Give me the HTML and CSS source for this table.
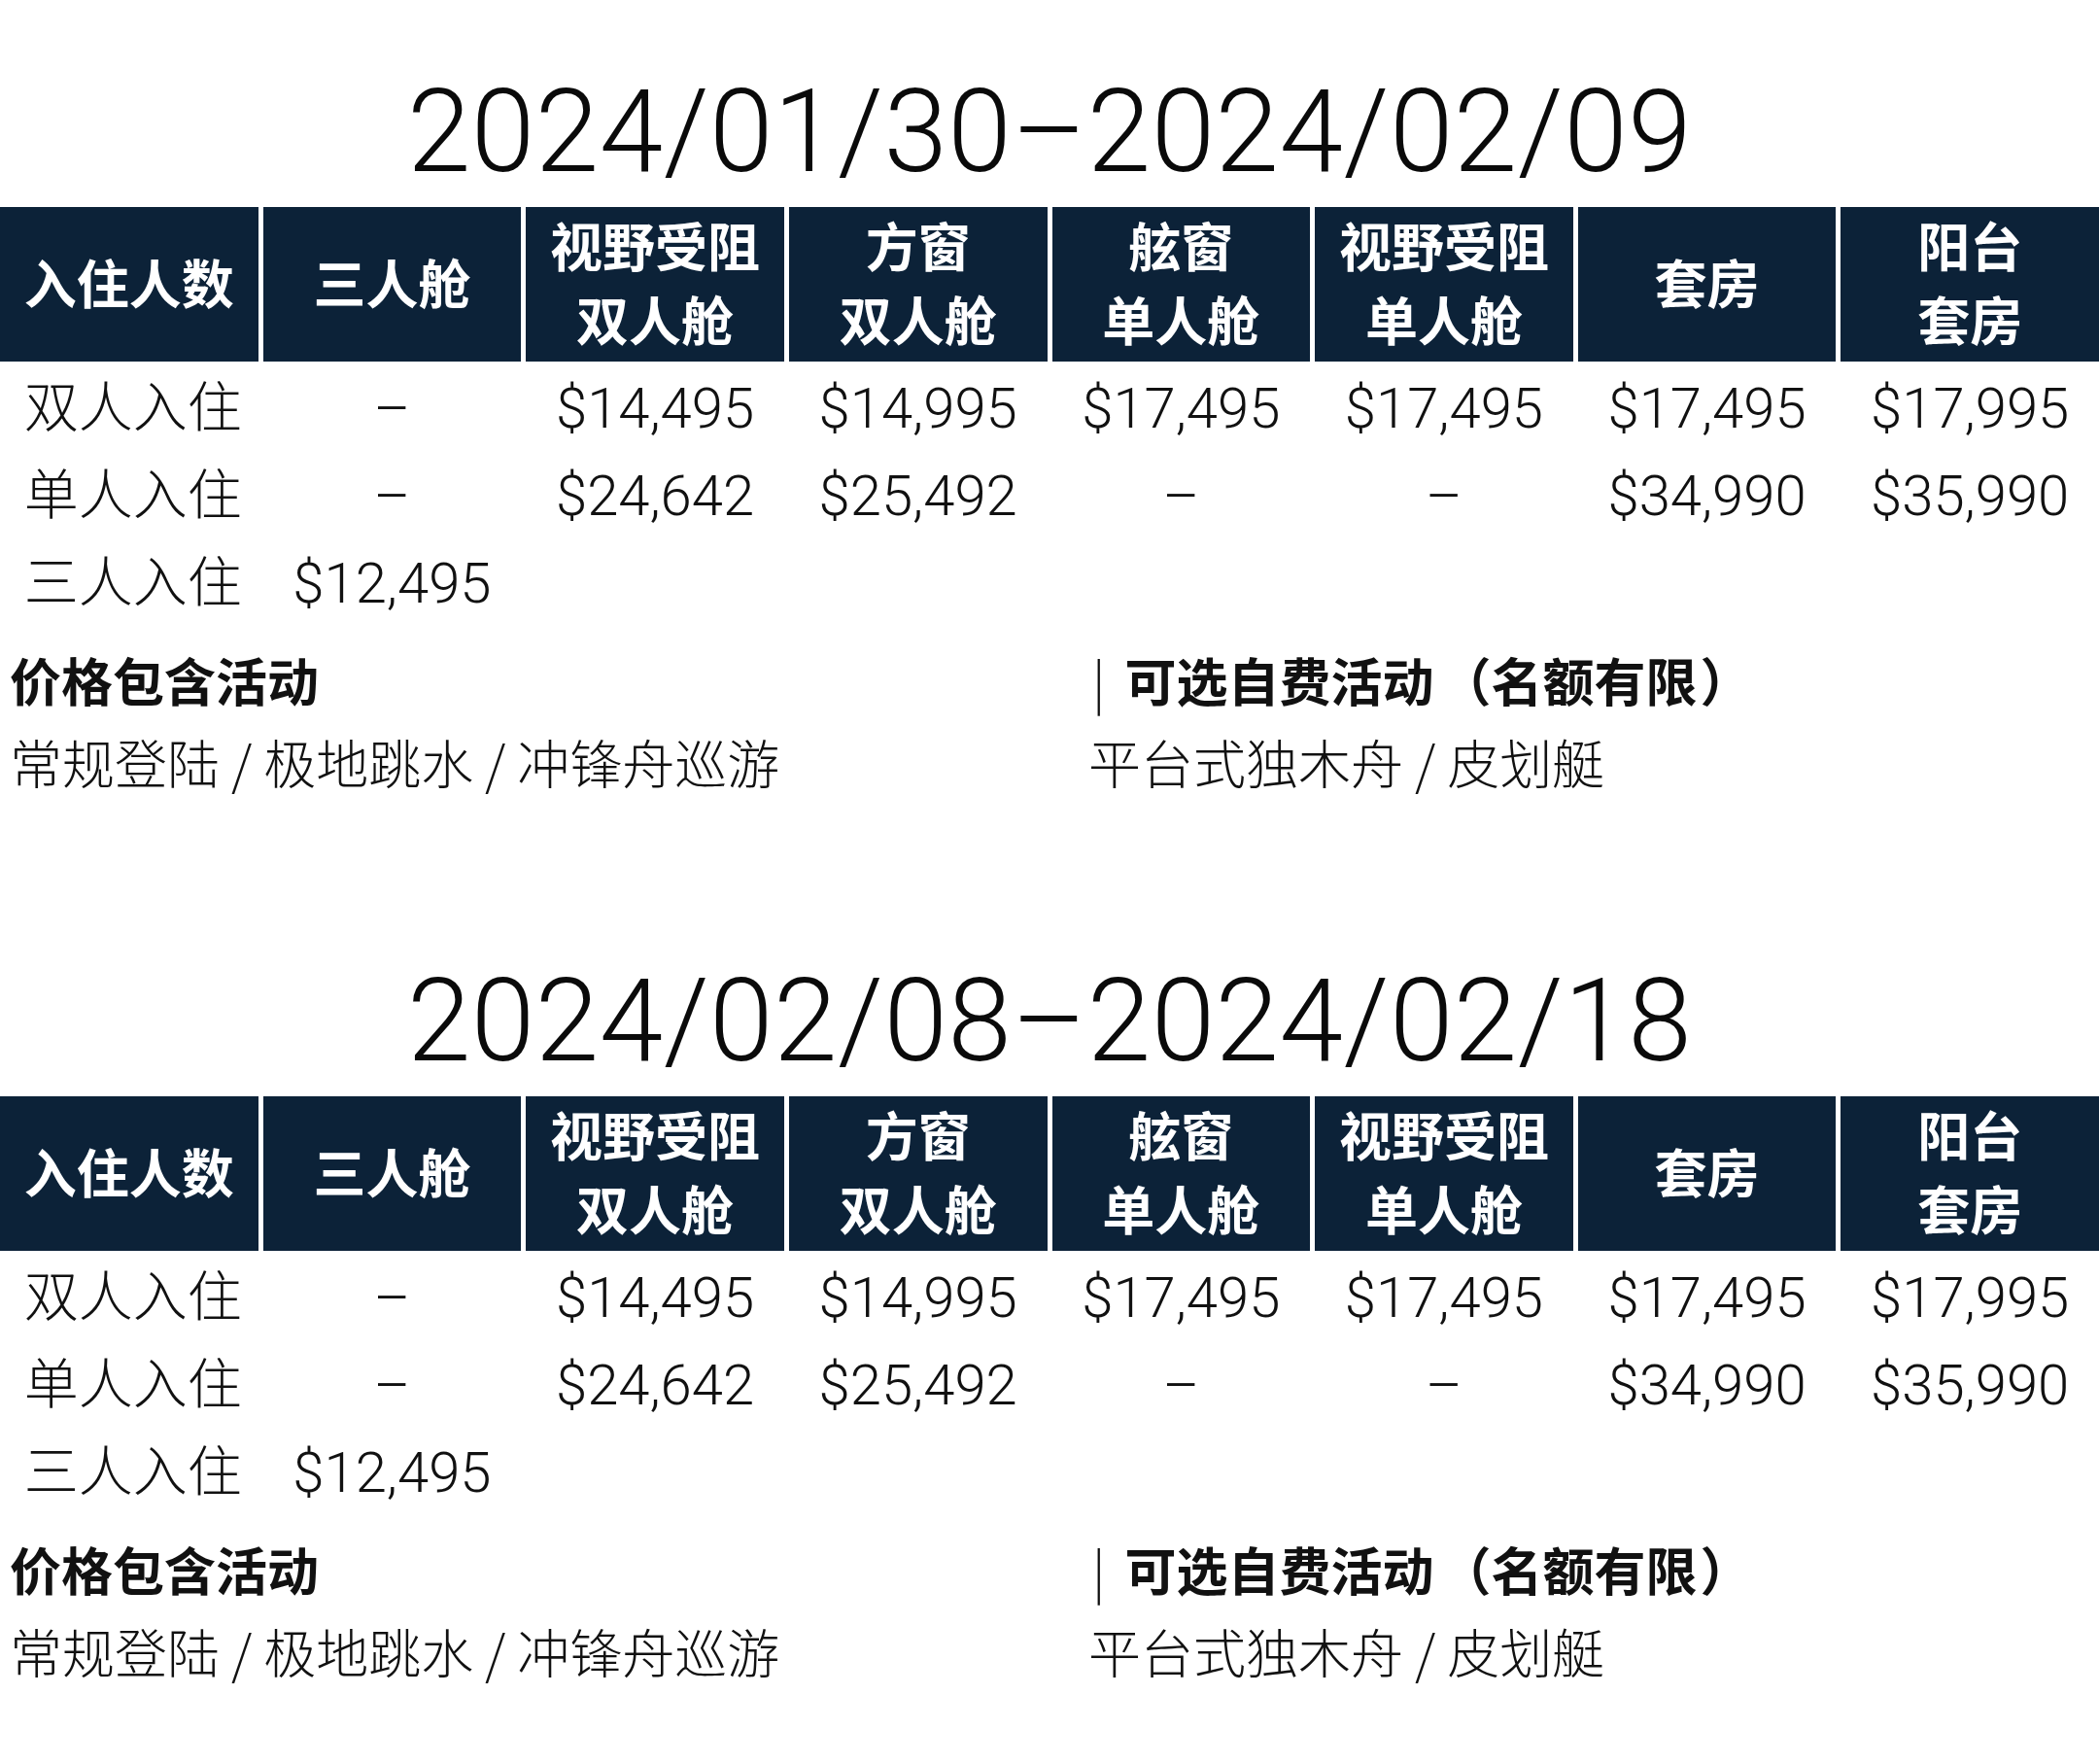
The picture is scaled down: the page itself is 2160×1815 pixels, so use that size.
FILE: index.html
```html
<!DOCTYPE html>
<html lang="zh-CN">
<head>
<meta charset="utf-8">
<title>价格表</title>
<link rel="stylesheet" href="styles.css">
</head>
<body>
<section class="period">
  <h2 class="title">2024/01/30–2024/02/09</h2>
  <div class="grid head">
    <div class="hcell">入住人数</div>
    <div class="hcell">三人舱</div>
    <div class="hcell">视野受阻<br>双人舱</div>
    <div class="hcell">方窗<br>双人舱</div>
    <div class="hcell">舷窗<br>单人舱</div>
    <div class="hcell">视野受阻<br>单人舱</div>
    <div class="hcell">套房</div>
    <div class="hcell">阳台<br>套房</div>
  </div>
  <div class="grid row">
    <div class="cell">双人入住</div><div class="cell">–</div><div class="cell">$14,495</div><div class="cell">$14,995</div><div class="cell">$17,495</div><div class="cell">$17,495</div><div class="cell">$17,495</div><div class="cell">$17,995</div>
  </div>
  <div class="grid row">
    <div class="cell">单人入住</div><div class="cell">–</div><div class="cell">$24,642</div><div class="cell">$25,492</div><div class="cell">–</div><div class="cell">–</div><div class="cell">$34,990</div><div class="cell">$35,990</div>
  </div>
  <div class="grid row">
    <div class="cell">三人入住</div><div class="cell">$12,495</div><div class="cell"></div><div class="cell"></div><div class="cell"></div><div class="cell"></div><div class="cell"></div><div class="cell"></div>
  </div>
  <div class="notes">
    <div class="note">
      <div class="note-label">价格包含活动</div>
      <div class="note-text">常规登陆 / 极地跳水 / 冲锋舟巡游</div>
    </div>
    <div class="note">
      <div class="note-label"><span class="bar">|</span>可选自费活动<span class="paren-open">（</span>名额有限<span class="paren-close">）</span></div>
      <div class="note-text">平台式独木舟 / 皮划艇</div>
    </div>
  </div>
</section>
<section class="period">
  <h2 class="title">2024/02/08–2024/02/18</h2>
  <div class="grid head">
    <div class="hcell">入住人数</div>
    <div class="hcell">三人舱</div>
    <div class="hcell">视野受阻<br>双人舱</div>
    <div class="hcell">方窗<br>双人舱</div>
    <div class="hcell">舷窗<br>单人舱</div>
    <div class="hcell">视野受阻<br>单人舱</div>
    <div class="hcell">套房</div>
    <div class="hcell">阳台<br>套房</div>
  </div>
  <div class="grid row">
    <div class="cell">双人入住</div><div class="cell">–</div><div class="cell">$14,495</div><div class="cell">$14,995</div><div class="cell">$17,495</div><div class="cell">$17,495</div><div class="cell">$17,495</div><div class="cell">$17,995</div>
  </div>
  <div class="grid row">
    <div class="cell">单人入住</div><div class="cell">–</div><div class="cell">$24,642</div><div class="cell">$25,492</div><div class="cell">–</div><div class="cell">–</div><div class="cell">$34,990</div><div class="cell">$35,990</div>
  </div>
  <div class="grid row">
    <div class="cell">三人入住</div><div class="cell">$12,495</div><div class="cell"></div><div class="cell"></div><div class="cell"></div><div class="cell"></div><div class="cell"></div><div class="cell"></div>
  </div>
  <div class="notes">
    <div class="note">
      <div class="note-label">价格包含活动</div>
      <div class="note-text">常规登陆 / 极地跳水 / 冲锋舟巡游</div>
    </div>
    <div class="note">
      <div class="note-label"><span class="bar">|</span>可选自费活动<span class="paren-open">（</span>名额有限<span class="paren-close">）</span></div>
      <div class="note-text">平台式独木舟 / 皮划艇</div>
    </div>
  </div>
</section>
</body>
</html>
```

FILE: styles.css
```css
html, body {
  margin: 0;
  padding: 0;
  background: #ffffff;
}
body {
  width: 2160px;
  color: #111111;
  font-family: Roboto, "Noto Sans CJK SC", sans-serif;
}
.period {
  padding-top: 66px;
}
.period + .period {
  margin-top: 96px;
}
.title {
  margin: 0 0 7px 0;
  height: 140px;
  line-height: 140px;
  font-size: 118px;
  font-weight: 300;
  text-align: center;
  letter-spacing: 0.5px;
  color: #0a0a0a;
}
.grid {
  display: grid;
  grid-template-columns: repeat(8, 1fr);
  column-gap: 5px;
}
.head {
  height: 159px;
  margin-bottom: 3px;
}
.hcell {
  background: #0c2238;
  color: #ffffff;
  display: flex;
  align-items: center;
  justify-content: center;
  text-align: center;
  padding-bottom: 6px;
  box-sizing: border-box;
  font-family: "Noto Sans CJK SC", sans-serif;
  font-weight: 700;
  font-size: 54px;
  line-height: 76px;
}
.row {
  height: 90px;
}
.cell {
  display: flex;
  align-items: center;
  justify-content: center;
  font-family: Roboto, "Noto Sans CJK SC", sans-serif;
  font-weight: 300;
  font-size: 58px;
  line-height: 90px;
  white-space: nowrap;
}
.cell:first-child {
  font-size: 56px;
  padding-left: 8px;
}
.notes {
  margin-top: 19px;
  display: grid;
  grid-template-columns: 1110px 1fr;
  padding-left: 10px;
}
.note-label {
  height: 70px;
  line-height: 70px;
  font-family: "Noto Sans CJK SC", sans-serif;
  font-weight: 700;
  font-size: 53px;
}
.bar {
  font-weight: 300;
  margin-left: 4px;
  margin-right: 20px;
}
.paren-open {
  margin-left: 6px;
}
.paren-close {
  margin-left: 3px;
}
.note-text {
  margin-top: 15px;
  height: 70px;
  line-height: 70px;
  font-family: "Noto Sans CJK SC", sans-serif;
  font-weight: 300;
  font-size: 54px;
}
```
